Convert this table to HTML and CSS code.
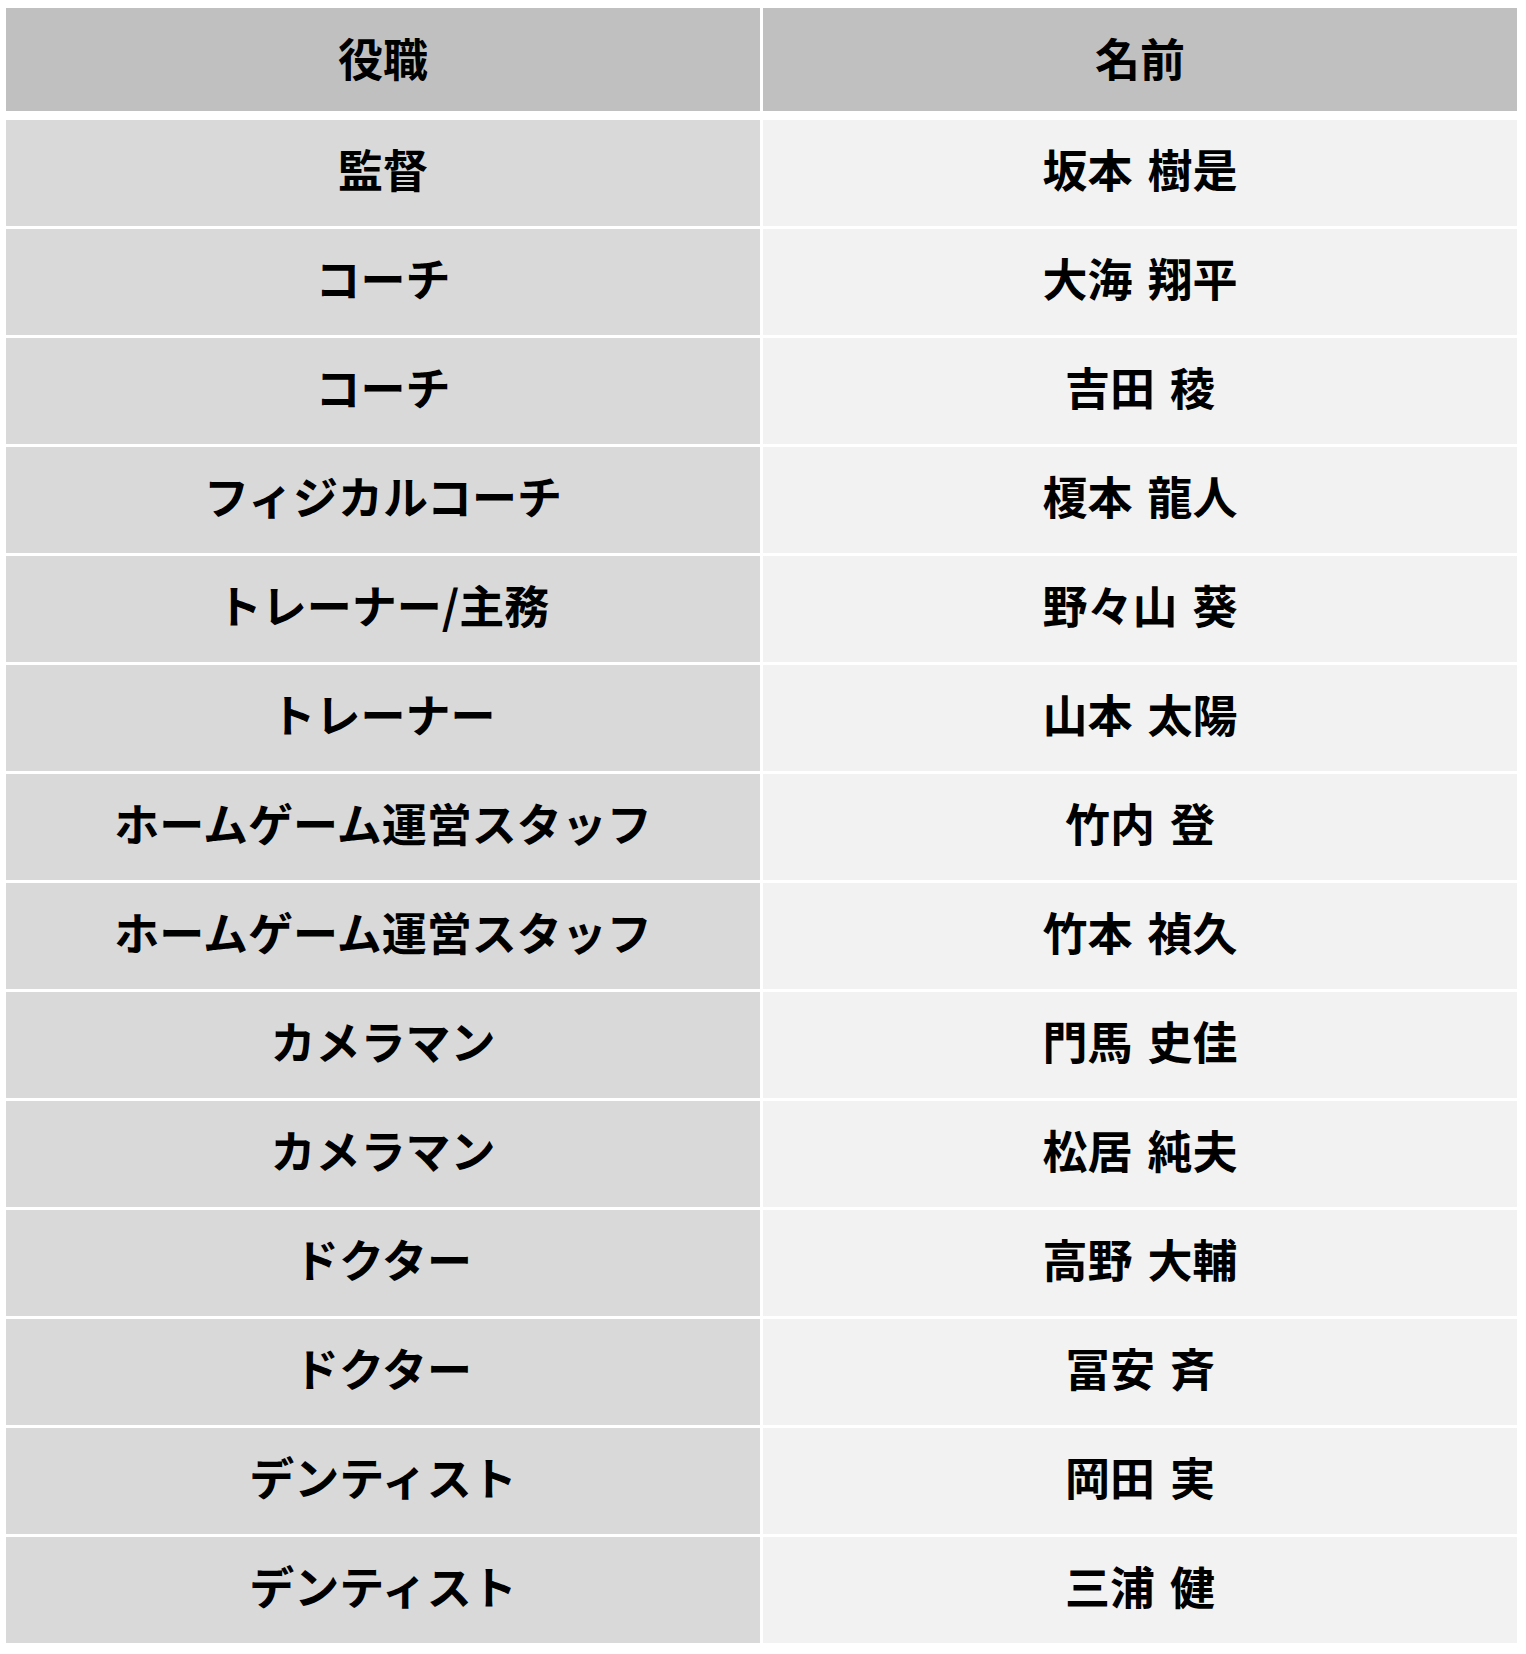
FILE: index.html
```html
<!DOCTYPE html>
<html lang="ja">
<head>
<meta charset="utf-8">
<title>スタッフ</title>
<link rel="stylesheet" href="styles.css">
</head>
<body>
<div class="staff">
  <div class="row head">
    <div class="cell">役職</div>
    <div class="cell">名前</div>
  </div>
  <div class="body">
    <div class="row"><div class="cell role">監督</div><div class="cell name">坂本 樹是</div></div>
    <div class="row"><div class="cell role">コーチ</div><div class="cell name">大海 翔平</div></div>
    <div class="row"><div class="cell role">コーチ</div><div class="cell name">吉田 稜</div></div>
    <div class="row"><div class="cell role">フィジカルコーチ</div><div class="cell name">榎本 龍人</div></div>
    <div class="row"><div class="cell role">トレーナー/主務</div><div class="cell name">野々山 葵</div></div>
    <div class="row"><div class="cell role">トレーナー</div><div class="cell name">山本 太陽</div></div>
    <div class="row"><div class="cell role">ホームゲーム運営スタッフ</div><div class="cell name">竹内 登</div></div>
    <div class="row"><div class="cell role">ホームゲーム運営スタッフ</div><div class="cell name">竹本 禎久</div></div>
    <div class="row"><div class="cell role">カメラマン</div><div class="cell name">門馬 史佳</div></div>
    <div class="row"><div class="cell role">カメラマン</div><div class="cell name">松居 純夫</div></div>
    <div class="row"><div class="cell role">ドクター</div><div class="cell name">高野 大輔</div></div>
    <div class="row"><div class="cell role">ドクター</div><div class="cell name">冨安 斉</div></div>
    <div class="row"><div class="cell role">デンティスト</div><div class="cell name">岡田 実</div></div>
    <div class="row"><div class="cell role">デンティスト</div><div class="cell name">三浦 健</div></div>
  </div>
</div>
</body>
</html>
```
FILE: styles.css
```css
html, body {
  margin: 0;
  padding: 0;
  background: #ffffff;
}

body {
  font-family: "Noto Sans CJK JP", "Noto Sans", sans-serif;
  font-weight: 700;
  color: #000000;
}

.staff {
  padding: 8px 9px 10px 6px;
  display: flex;
  flex-direction: column;
  gap: 9px;
}

.body {
  display: flex;
  flex-direction: column;
  gap: 3px;
}

.row {
  display: grid;
  grid-template-columns: 1fr 1fr;
  column-gap: 3px;
  height: 106px;
}

.row.head {
  height: 103px;
}

.cell {
  display: flex;
  align-items: center;
  justify-content: center;
  font-size: 45px;
  line-height: 1;
  white-space: pre;
  box-sizing: border-box;
  padding-bottom: 10px;
}

.head .cell {
  background: #c0c0c0;
  padding-bottom: 4px;
}

.role {
  background: #d9d9d9;
}

.name {
  background: #f2f2f2;
  word-spacing: 5px;
}
```
